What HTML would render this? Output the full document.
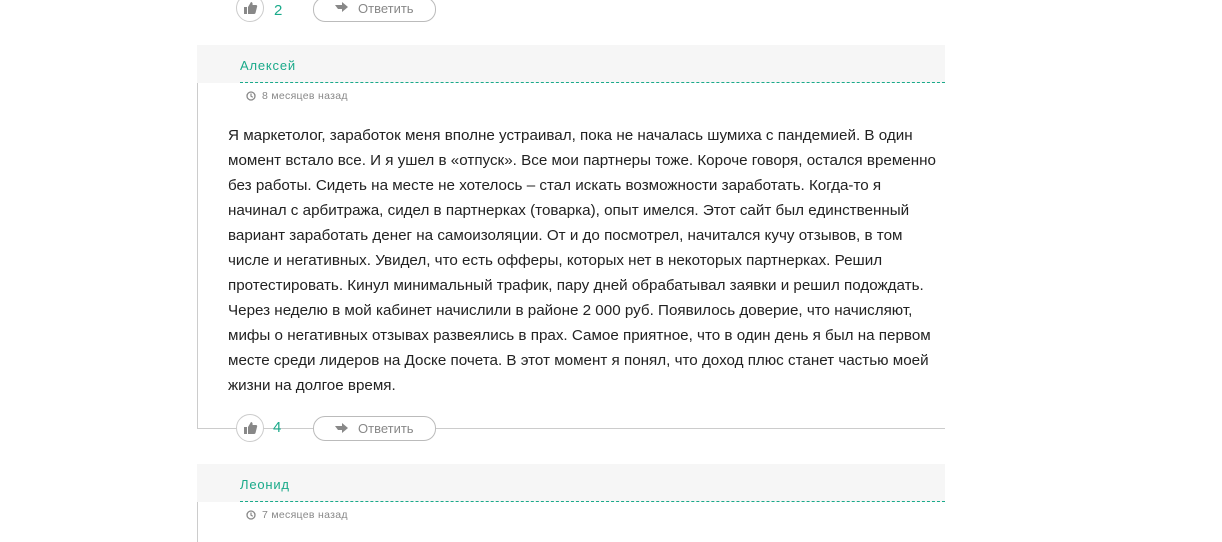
<!DOCTYPE html>
<html><head><meta charset="utf-8"><style>
body{margin:0;width:1222px;height:542px;background:#fff;position:relative;overflow:hidden;font-family:"Liberation Sans",sans-serif;}
.abs{position:absolute}
.hdr{position:absolute;left:197px;width:748px;height:38px;background:#f6f6f6}
.name{position:absolute;left:240px;color:#1aaa8a;font-size:13px;letter-spacing:0.8px}
.dash{position:absolute;left:240px;width:705px;border-top:1px dashed #1aaa8a}
.date{position:absolute;left:246px;color:#888;font-size:10.5px;letter-spacing:0.3px}
.date svg{vertical-align:-2px;margin-right:6px}
.txt{position:absolute;left:228px;top:123px;font-size:15.2px;line-height:25px;color:#222;white-space:nowrap}
.circ{position:absolute;width:26px;height:26px;border:1px solid #ccc;border-radius:50%;background:#fff}
.btn{position:absolute;width:121px;height:23px;border:1px solid #bbb;border-radius:12px;background:#fff;color:#888;font-size:13px;line-height:23px}
</style></head><body>
<div class="circ" style="left:236px;top:-6px"><svg width="26" height="26" viewBox="0 0 26 26"><path d="M7 12h3v7H7z M11 12l3-5c1 0 2 1 1.5 3H19c1 0 1.5 1 1 2l-1.5 6c-.3.8-1 1-1.5 1H11z" fill="#888"/></svg></div>
<div class="abs" style="left:274px;top:2px;color:#1aaa8a;font-size:15px">2</div>
<div class="btn" style="left:313px;top:-3px"><svg class="abs" style="left:20px;top:4px" width="14" height="11" viewBox="0 0 14 11"><path d="M1 3h7V0l6 5-6 5V7H4z" fill="#888"/></svg><span style="position:absolute;left:44px;top:-1px">Ответить</span></div>

<div class="hdr" style="top:45px"></div>
<div class="name" style="top:58px">Алексей</div>
<div class="dash" style="top:82px"></div>
<div class="abs" style="left:197px;top:83px;width:1px;height:345px;background:#ccc"></div>
<div class="date" style="top:90px"><svg width="10" height="10" viewBox="0 0 10 10"><circle cx="5" cy="5" r="4" fill="none" stroke="#888" stroke-width="1.3"/><path d="M5 2.5V5.2L6.8 6.3" stroke="#888" stroke-width="1.2" fill="none"/></svg>8 месяцев назад</div>
<div class="txt">Я маркетолог, заработок меня вполне устраивал, пока не началась шумиха с пандемией. В один<br>момент встало все. И я ушел в «отпуск». Все мои партнеры тоже. Короче говоря, остался временно<br>без работы. Сидеть на месте не хотелось – стал искать возможности заработать. Когда-то я<br>начинал с арбитража, сидел в партнерках (товарка), опыт имелся. Этот сайт был единственный<br>вариант заработать денег на самоизоляции. От и до посмотрел, начитался кучу отзывов, в том<br>числе и негативных. Увидел, что есть офферы, которых нет в некоторых партнерках. Решил<br>протестировать. Кинул минимальный трафик, пару дней обрабатывал заявки и решил подождать.<br>Через неделю в мой кабинет начислили в районе 2 000 руб. Появилось доверие, что начисляют,<br>мифы о негативных отзывах развеялись в прах. Самое приятное, что в один день я был на первом<br>месте среди лидеров на Доске почета. В этот момент я понял, что доход плюс станет частью моей<br>жизни на долгое время.</div>

<div class="abs" style="left:197px;top:428px;width:748px;height:1px;background:#ccc"></div>
<div class="circ" style="left:236px;top:414px"><svg width="26" height="26" viewBox="0 0 26 26"><path d="M7 12h3v7H7z M11 12l3-5c1 0 2 1 1.5 3H19c1 0 1.5 1 1 2l-1.5 6c-.3.8-1 1-1.5 1H11z" fill="#888"/></svg></div>
<div class="abs" style="left:273px;top:419px;color:#1aaa8a;font-size:15px">4</div>
<div class="btn" style="left:313px;top:416px"><svg class="abs" style="left:20px;top:6px" width="14" height="11" viewBox="0 0 14 11"><path d="M1 3h7V0l6 5-6 5V7H4z" fill="#888"/></svg><span style="position:absolute;left:44px">Ответить</span></div>

<div class="hdr" style="top:464px"></div>
<div class="name" style="top:477px">Леонид</div>
<div class="dash" style="top:501px"></div>
<div class="abs" style="left:197px;top:502px;width:1px;height:40px;background:#ccc"></div>
<div class="date" style="top:509px"><svg width="10" height="10" viewBox="0 0 10 10"><circle cx="5" cy="5" r="4" fill="none" stroke="#888" stroke-width="1.3"/><path d="M5 2.5V5.2L6.8 6.3" stroke="#888" stroke-width="1.2" fill="none"/></svg>7 месяцев назад</div>
</body></html>
